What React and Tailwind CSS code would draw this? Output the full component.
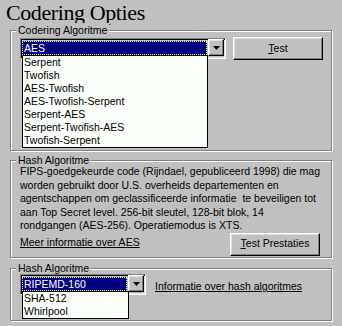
import React from 'react'

const raised =
  'border border-t-white border-l-white border-r-black border-b-black shadow-[inset_-1px_-1px_0_#808080,inset_1px_1px_0_#dfdfdf]'
const sunken =
  'border border-t-[#808080] border-l-[#808080] border-r-white border-b-white shadow-[inset_1px_1px_0_#000,inset_-1px_-1px_0_#dfdfdf]'

const CIPHERS = [
  'Serpent',
  'Twofish',
  'AES-Twofish',
  'AES-Twofish-Serpent',
  'Serpent-AES',
  'Serpent-Twofish-AES',
  'Twofish-Serpent'
]

function GroupBox({ label, className, children }) {
  return (
    <div className={`relative mx-[10px] border border-[#808080] shadow-[inset_1px_1px_0_#fff,1px_1px_0_#fff] ${className}`}>
      <span className="absolute -top-[8px] left-[5px] bg-[#c0c0c0] px-[2px] leading-[14px]">{label}</span>
      {children}
    </div>
  )
}

function Arrow() {
  return (
    <svg width="7" height="4" viewBox="0 0 7 4">
      <path d="M0 0h7L3.5 4z" fill="#000" />
    </svg>
  )
}

function Combo({ value, items, outer, list }) {
  return (
    <div className={`relative h-[21px] ${sunken} ${outer}`}>
      <div className="flex h-full p-[1px]">
        <div className="flex-1 pt-[1px] pr-[1px]">
          <div className="h-[14px] bg-[#000080] text-white leading-[12px] pl-[1px] border border-dotted border-[#ffff80]">
            {value}
          </div>
        </div>
        <div className={`w-[16px] h-[17px] -mt-[1px] bg-[#c0c0c0] flex items-center justify-center ${raised}`}>
          <Arrow />
        </div>
      </div>
      <div className={`absolute left-[1px] top-[16px] border border-black bg-[#fafffa] ${list}`}>
        {items.map(item => (
          <div key={item} className="h-[13px] leading-[13px] pl-[1px] whitespace-nowrap">
            {item}
          </div>
        ))}
      </div>
    </div>
  )
}

function Button({ children, className }) {
  return (
    <button className={`h-[23px] bg-[#c0c0c0] flex items-center justify-center ${raised} ${className}`}>
      {children}
    </button>
  )
}

export default function App() {
  return (
    <div className="w-[342px] h-[326px] overflow-hidden bg-[#c0c0c0] text-black text-[10.5px] font-['Liberation_Sans',Arial,sans-serif]">
      <h1 className="h-[30px] pl-[6px] pt-[1px] font-['Liberation_Serif','Times_New_Roman',serif] text-[22px] leading-[24px] tracking-[-0.4px]">
        Codering Opties
      </h1>

      {/* Codering Algoritme */}
      <GroupBox label="Codering Algoritme" className="h-[121px]">
        <div className="flex items-start pl-[9px] pt-[6px]">
          <Combo value="AES" items={CIPHERS} outer="w-[206px] mt-[1px]" list="w-[186px]" />
          <Button className="w-[90px] ml-[7px]">
            <span><span className="underline">T</span>est</span>
          </Button>
        </div>
      </GroupBox>

      {/* Description */}
      <GroupBox label="Hash Algoritme" className="h-[98px] mt-[9px]">
        <div className="pl-[9px] pr-[11px] pt-[4px] leading-[13.5px]">
          <p className="whitespace-pre">
            FIPS-goedgekeurde code (Rijndael, gepubliceerd 1998) die mag{'\n'}
            worden gebruikt door U.S. overheids departementen en{'\n'}
            agentschappen om geclassificeerde informatie  te beveiligen tot{'\n'}
            aan Top Secret level. 256-bit sleutel, 128-bit blok, 14{'\n'}
            rondgangen (AES-256). Operatiemodus is XTS.
          </p>
          <div className="flex items-start">
            <a className="underline mt-[3px]">Meer informatie over AES</a>
            <Button className="w-[90px] ml-auto">
              <span><span className="underline">T</span>est Prestaties</span>
            </Button>
          </div>
        </div>
      </GroupBox>

      {/* Hash Algoritme */}
      <GroupBox label="Hash Algoritme" className="h-[53px] mt-[10px]">
        <div className="flex items-start pl-[9px] pt-[5px]">
          <Combo value="RIPEMD-160" items={['SHA-512', 'Whirlpool']} outer="w-[126px]" list="w-[107px]" />
          <a className="underline ml-[9px] mt-[5px]">Informatie over hash algoritmes</a>
        </div>
      </GroupBox>
    </div>
  )
}
